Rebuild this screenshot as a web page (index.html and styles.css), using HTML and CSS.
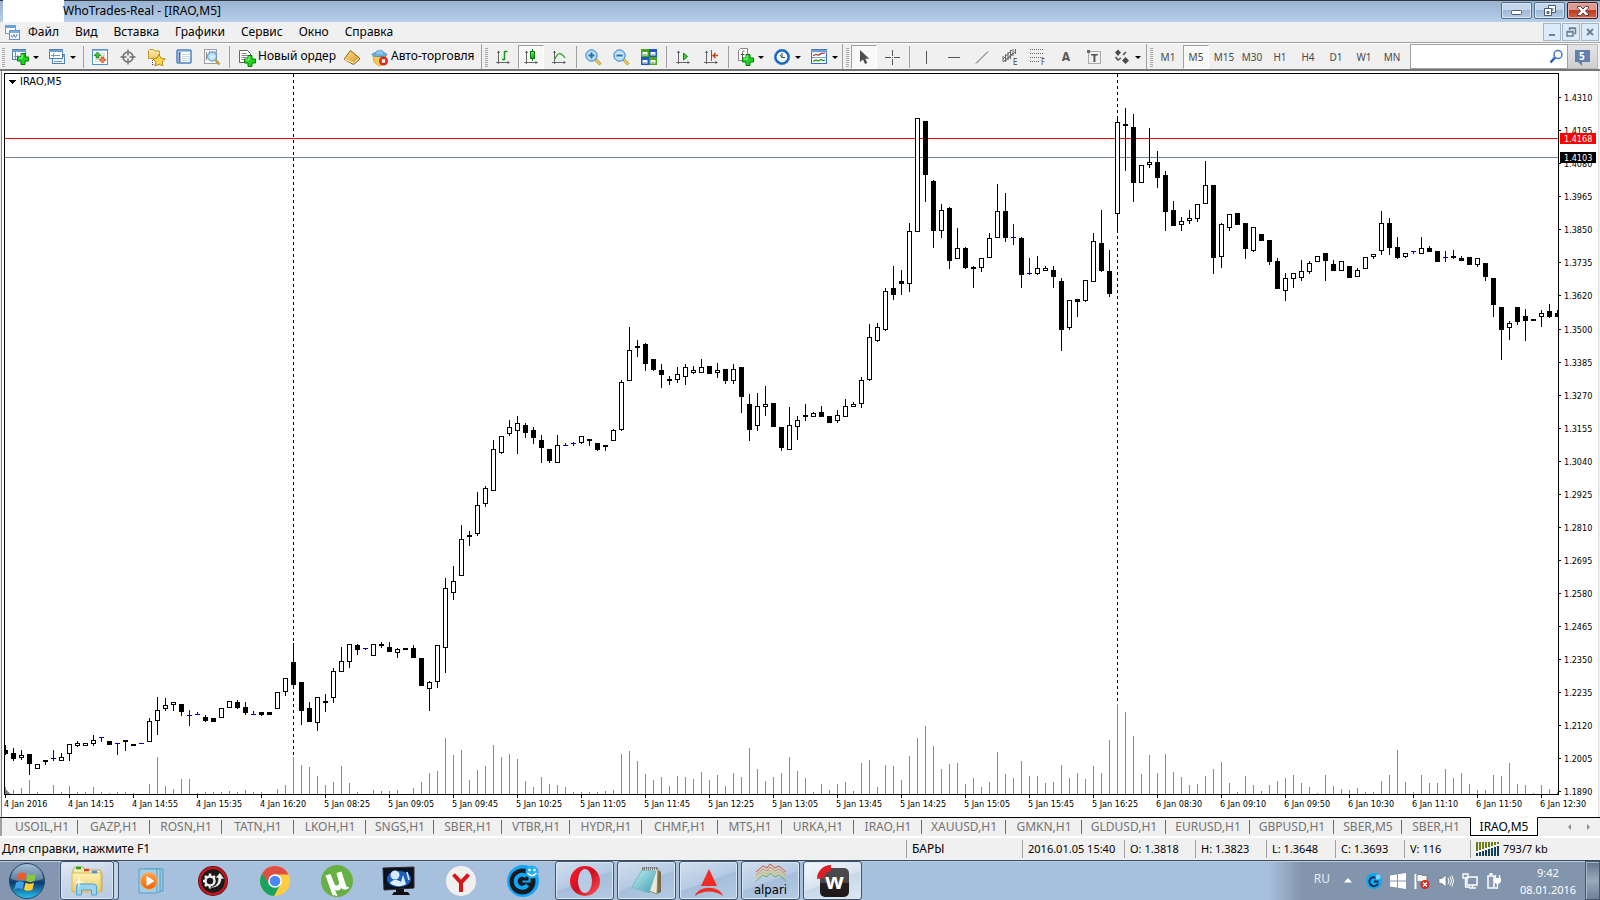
FILE: index.html
```html
<!DOCTYPE html>
<html lang="ru">
<head>
<meta charset="utf-8">
<title>WhoTrades-Real - [IRAO,M5]</title>
<link rel="stylesheet" href="styles.css">
</head>
<body>
<svg class="defs" aria-hidden="true">
  <defs>
    <linearGradient id="gOrb" x1="0" y1="0" x2="0" y2="1"><stop offset="0" stop-color="#7f9fc0"/><stop offset=".45" stop-color="#22507f"/><stop offset=".55" stop-color="#0a3c6e"/><stop offset="1" stop-color="#29c3f5"/></linearGradient>
    <linearGradient id="gFolder" x1="0" y1="0" x2="0" y2="1"><stop offset="0" stop-color="#fdf3b4"/><stop offset="1" stop-color="#ecc867"/></linearGradient>
    <linearGradient id="gOrange" x1="0" y1="0" x2="0" y2="1"><stop offset="0" stop-color="#ffa64d"/><stop offset="1" stop-color="#ee6206"/></linearGradient>
    <linearGradient id="gOpera" x1="0" y1="0" x2="1" y2="1"><stop offset="0" stop-color="#ff1b2d"/><stop offset=".5" stop-color="#d01020"/><stop offset="1" stop-color="#ff5560"/></linearGradient>
    <linearGradient id="gNote" x1="0" y1="0" x2="1" y2="1"><stop offset="0" stop-color="#c3eef2"/><stop offset="1" stop-color="#3d9fb0"/></linearGradient>
    <linearGradient id="gW" x1="0" y1="0" x2="0" y2="1"><stop offset="0" stop-color="#4c4c4e"/><stop offset=".5" stop-color="#474749"/><stop offset=".51" stop-color="#262022"/><stop offset="1" stop-color="#1c1718"/></linearGradient>
    <linearGradient id="gGreen" x1="0" y1="0" x2="0" y2="1"><stop offset="0" stop-color="#6df06d"/><stop offset="1" stop-color="#0ba90b"/></linearGradient>
    <linearGradient id="gBook" x1="0" y1="0" x2="1" y2="1"><stop offset="0" stop-color="#fbe08a"/><stop offset="1" stop-color="#d0932a"/></linearGradient>
    <radialGradient id="gLens"><stop offset="0" stop-color="#e2f6ff"/><stop offset="1" stop-color="#9fd4f5"/></radialGradient>
    <symbol id="plus" viewBox="0 0 12 12"><path d="M4 .5h4V4h3.500v4H8v3.500H4V8H.5V4H4z" fill="#1fd61f" stroke="#067a06"/><path d="M5 1.500v3.500H1.500" fill="none" stroke="#9dff9d"/></symbol>
    <symbol id="axes" viewBox="0 0 16 16"><path d="M3.500 15V2M1 13.500h13" fill="none" stroke="#666"/><path d="M2 4h3L3.500 1.500zM12.500 12v3l2.500-1.500z" fill="#555"/></symbol>
  </defs>
</svg>

<header class="titlebar">
  <div class="title-mask"></div>
  <h1 class="title">WhoTrades-Real - [IRAO,M5]</h1>
  <div class="win-buttons">
    <button class="win-btn" aria-label="Свернуть"><svg width="29" height="15"><rect x="9.500" y="7.500" width="10" height="4" rx="1" fill="#fff" stroke="#4c5a70"/></svg></button>
    <button class="win-btn" aria-label="Восстановить"><svg width="29" height="15"><path d="M13.500 2.500h7v7h-7z" fill="#fff" stroke="#4c5a70"/><path d="M15.500 5h3v3h-3z" fill="#7e98b8"/><path d="M9.500 5.500h7v7h-7z" fill="#fff" stroke="#4c5a70"/><path d="M12 8.500h2v2h-2z" fill="#9ab3cf" stroke="#4c5a70"/></svg></button>
    <button class="win-btn win-close" aria-label="Закрыть"><svg width="29" height="15"><path d="M9.500 3.500h3l2.500 2.500 2.500-2.500h3v1.500L17.500 8l3 3v1.500h-3L15 10l-2.500 2.500h-3V11l3-3-3-3z" fill="#fff" stroke="#5a3a42"/></svg></button>
  </div>
</header>

<nav class="menubar">
  <svg class="app-icon" width="15" height="15"><rect x=".5" y=".5" width="10" height="8" fill="#fff" stroke="#6aa0dc"/><path d="M1 2h9" stroke="#6aa0dc" stroke-width="2"/><rect x="4.500" y="5.500" width="10" height="9" fill="#fff" stroke="#5a94d8"/><path d="M5 7h9" stroke="#7db0e6" stroke-width="2"/><path d="M6 10l1.500 2.500L9 9.500l1.500 3L12 9.500l1 1" fill="none" stroke="#4a86cc"/></svg>
  <button class="menu">Файл</button><button class="menu">Вид</button><button class="menu">Вставка</button><button class="menu">Графики</button><button class="menu">Сервис</button><button class="menu">Окно</button><button class="menu">Справка</button>
  <div class="mdi-buttons">
    <button class="mdi-btn" aria-label="Свернуть окно"><svg width="16" height="16"><path d="M5 11h6" stroke="#6c8296" stroke-width="2"/></svg></button>
    <button class="mdi-btn" aria-label="Восстановить окно"><svg width="16" height="16"><path d="M6.500 6V4h6v5.500H11M6.500 4.500h6" fill="none" stroke="#6c8296" stroke-width="1.500"/><path d="M4 7.500h6V12H4zM4 8h6" fill="none" stroke="#6c8296" stroke-width="1.500"/></svg></button>
    <button class="mdi-btn" aria-label="Закрыть окно"><svg width="16" height="16"><path d="M5 5l6 6M11 5l-6 6" stroke="#6c8296" stroke-width="2"/></svg></button>
  </div>
</nav>

<div class="toolbar">
  <div class="group group-first">
    <button class="tool drop" aria-label="Новый график"><svg width="18" height="18"><rect x="1.500" y="1.500" width="13" height="10" fill="#fff" stroke="#4f81b5"/><path d="M1 3h14" stroke="#6f9fd0" stroke-width="2"/><path d="M4.500 4v7M3 8.500h9M7 7v3" stroke="#7d93a8" fill="none"/><use href="#plus" x="6" y="5" width="12" height="12"/></svg></button>
    <button class="tool drop" aria-label="Профили"><svg width="18" height="18"><rect x="4.500" y="6.500" width="12" height="9" fill="#eaf3fb" stroke="#4f81b5"/><path d="M4 8h13" stroke="#6f9fd0" stroke-width="2"/><rect x="1.500" y="1.500" width="13" height="9" fill="#fff" stroke="#4f81b5"/><path d="M1 3h14" stroke="#6f9fd0" stroke-width="2"/><path d="M3 7.500h9M5.500 5v4M6 13.500h8" stroke="#8095a8"/></svg></button>
    <span class="sep"></span>
    <button class="tool" aria-label="Обзор рынка"><svg width="16" height="16"><rect x=".5" y=".5" width="15" height="15" fill="#fff" stroke="#5592cc"/><path d="M1 1.500h14" stroke="#8fc0ea"/><path d="M9 4.500h4M10 6.500h3M3 10.500h3M3 12.500h4" stroke="#d0d5da"/><path d="M5.500 3L9 6.500H7V9H4V6.500H2z" fill="#3fbf3f" stroke="#0c7a0c" stroke-width=".7"/><path d="M10.500 14L7 10.500h2V8h3v2.500h2z" fill="#f0884e" stroke="#b8330c" stroke-width=".7"/></svg></button>
    <button class="tool" aria-label="Окно данных"><svg width="16" height="16"><circle cx="8" cy="8" r="5" fill="none" stroke="#6d6d6d" stroke-width="1.500"/><path d="M8 .5v6M8 9.500v6M.5 8h6M9.500 8h6" stroke="#6d6d6d" stroke-width="1.300"/></svg></button>
    <button class="tool" aria-label="Навигатор"><svg width="19" height="18"><path d="M1.500 10.500v-8l1-1h4l1 1.500h5v7.500z" fill="url(#gFolder)" stroke="#c29a26"/><path d="M5.500 12v5h3" fill="none" stroke="#555" stroke-dasharray="1 1"/><path d="M12 6.500l2 3.700 4.200.7-3 3 .6 4-3.800-1.800-3.700 1.800.6-4-3-3 4.200-.7z" fill="#ffd84a" stroke="#b98a12"/></svg></button>
    <button class="tool" aria-label="Терминал"><svg width="16" height="16"><rect x="1" y="1" width="14" height="13" rx="1" fill="#fff" stroke="#4a80c0" stroke-width="1.500"/><path d="M2 2.500h12" stroke="#a9c9ea"/><path d="M3.500 3v10" stroke="#4a6ea0" stroke-width="2"/><path d="M6 5.500h8M6 7.500h8M6 9.500h8M6 11.500h8" stroke="#c9d8e8"/></svg></button>
    <button class="tool" aria-label="Тестер стратегий"><svg width="18" height="18"><rect x="1.500" y="1.500" width="12" height="14" fill="#f7f7f7" stroke="#9aa0a6"/><path d="M3.500 12V4M6.500 9V3M9.500 8V3M12 6V3" stroke="#8a8f94"/><circle cx="9" cy="8.500" r="4.500" fill="url(#gLens)" fill-opacity=".85" stroke="#5d93c4"/><path d="M12.500 12l4 4.500" stroke="#c89834" stroke-width="2.500"/></svg></button>
    <span class="sep"></span>
    <button class="tool labelled order"><svg width="18" height="18"><path d="M1.500 1.500h8l3 3v9h-11z" fill="#fff" stroke="#666"/><path d="M3.500 4.500h5M3.500 6.500h7M3.500 8.500h6M3.500 10.500h4" stroke="#888"/><use href="#plus" x="6" y="6" width="12" height="12"/></svg>Новый ордер</button>
    <button class="tool" aria-label="MetaEditor"><svg width="18" height="16"><path d="M1.500 9.500L7.500 1.500l9 7.500v1.500L10.500 15.500l-9-5z" fill="url(#gBook)" stroke="#8f6212"/><path d="M2 10.500l8.500 3.500 5.500-4.500" fill="none" stroke="#fff3c8"/></svg></button>
    <button class="tool labelled auto"><svg width="18" height="18"><path d="M2 7h13l-2 8-5 2-5-4z" fill="#f3cc52" stroke="#c3922a" stroke-width=".7"/><ellipse cx="8.500" cy="5.500" rx="7.500" ry="2.200" fill="#6fb3dc" stroke="#3a83b5" stroke-width=".7"/><path d="M4.500 5C5 1.500 7 1 8 2c1.500-1.500 4.500-1 5 3" fill="#8ac8ea" stroke="#3a83b5" stroke-width=".7"/><circle cx="12.500" cy="12" r="4.500" fill="#dc2a1c"/><rect x="10.800" y="10.300" width="3.400" height="3.400" fill="#fff"/></svg>Авто-торговля</button>
  </div>
  <div class="group">
    <button class="tool" aria-label="Бары"><svg width="16" height="16"><use href="#axes" width="16" height="16"/><path d="M9.500 2v9M9.500 2.500h3M7 10.500h2.500" fill="none" stroke="#149a14" stroke-width="1.500"/></svg></button>
    <button class="tool pressed" aria-label="Свечи"><svg width="16" height="16"><use href="#axes" width="16" height="16"/><path d="M9.500 0v12" stroke="#0b7a0b"/><rect x="7.500" y="2.500" width="4" height="7" fill="url(#gGreen)" stroke="#0b7a0b"/></svg></button>
    <button class="tool" aria-label="Линия"><svg width="16" height="16"><use href="#axes" width="16" height="16"/><path d="M4 10c3-7 6-7 10-1" fill="none" stroke="#28a028" stroke-width="1.200"/></svg></button>
    <span class="sep"></span>
    <button class="tool" aria-label="Приблизить"><svg width="17" height="17"><path d="M10.500 10.500l5 5" stroke="#b58a2a" stroke-width="3"/><path d="M10.500 10.500l5 5" stroke="#f2d468" stroke-width="1.500"/><circle cx="6.500" cy="6.500" r="5.700" fill="url(#gLens)" stroke="#3c7fc0"/><path d="M6.500 3.500v6M3.500 6.500h6" stroke="#2a70a8" stroke-width="2"/></svg></button>
    <button class="tool" aria-label="Отдалить"><svg width="17" height="17"><path d="M10.500 10.500l5 5" stroke="#b58a2a" stroke-width="3"/><path d="M10.500 10.500l5 5" stroke="#f2d468" stroke-width="1.500"/><circle cx="6.500" cy="6.500" r="5.700" fill="url(#gLens)" stroke="#3c7fc0"/><path d="M3.500 6.500h6" stroke="#2a70a8" stroke-width="2"/></svg></button>
    <button class="tool" aria-label="Расположить окна"><svg width="16" height="16"><path d="M0 0h8v8H0zM8 8h8v8H8z" fill="#46a818"/><path d="M8 0h8v8H8zM0 8h8v8H0z" fill="#1f57c4"/><path d="M1.500 3h5v3.500h-5zM9.500 3h5v3.500h-5zM1.500 11h5v3.500h-5zM9.500 11h5v3.500h-5z" fill="#f4f8f4"/><path d="M2.500 5.500h3M10.500 5.500h3M2.500 13.500h3M10.500 13.500h3" stroke="#9ab"/></svg></button>
    <span class="sep"></span>
    <button class="tool" aria-label="Автопрокрутка"><svg width="16" height="16"><use href="#axes" width="16" height="16"/><path d="M8.500 4v7l4-3.500z" fill="#3fd03f" stroke="#0b8a0b"/></svg></button>
    <button class="tool" aria-label="Сдвиг графика"><svg width="16" height="16"><use href="#axes" width="16" height="16"/><path d="M8.500 1v11" stroke="#2a6fb0"/><path d="M15 6.500h-5M12.500 4L10 6.500 12.500 9" fill="none" stroke="#d04010" stroke-width="1.400"/></svg></button>
    <span class="sep"></span>
    <button class="tool drop" aria-label="Индикаторы"><svg width="18" height="18"><path d="M2.500 2.500l2-2h7v12h-9z" fill="#fff" stroke="#888"/><path d="M8.500 3c-2-.5-2 1-2 3v4M4.500 6.500h4" fill="none" stroke="#555"/><use href="#plus" x="6" y="6" width="12" height="12"/></svg></button>
    <button class="tool drop" aria-label="Периоды"><svg width="18" height="18"><circle cx="9" cy="9" r="6.700" fill="#eef6fc" stroke="#0f5cb4" stroke-width="2.500"/><circle cx="9" cy="9" r="7.500" fill="none" stroke="#4ea3ee" stroke-width=".7"/><path d="M9 5v4.500h3M7 7l2 2.500" fill="none" stroke="#444"/></svg></button>
    <button class="tool drop" aria-label="Шаблоны"><svg width="18" height="18"><rect x="1.500" y="1.500" width="15" height="14" fill="#fff" stroke="#3a70b4"/><path d="M1 3h16" stroke="#6fa0dc" stroke-width="2.500"/><path d="M2 9.500h14" stroke="#7aa4d4"/><path d="M3 7.500l3-1 3 .5 2-1.500 4-.500" fill="none" stroke="#a82410" stroke-width="1.200"/><path d="M3 13.500l3-1.500 2 1 3-1.500 2 1 2-.5" fill="none" stroke="#1d8a1d" stroke-width="1.200"/></svg></button>
  </div>
  <div class="group">
    <button class="tool pressed" aria-label="Курсор"><svg width="16" height="16"><path d="M4 1v12l3-2.500 2 4.500 2.300-1-2-4.300h4z" fill="#4d4d4d"/></svg></button>
    <button class="tool" aria-label="Перекрестие"><svg width="16" height="16"><path d="M8.500 1v6M8.500 10v6M1 8.500h6M10 8.500h6M8 8.500h1" stroke="#555"/></svg></button>
    <span class="sep"></span>
    <button class="tool" aria-label="Вертикальная линия"><svg width="16" height="16"><path d="M8.500 2v13" stroke="#555"/></svg></button>
    <button class="tool" aria-label="Горизонтальная линия"><svg width="16" height="16"><path d="M2 8.500h12" stroke="#555"/></svg></button>
    <button class="tool" aria-label="Трендовая линия"><svg width="16" height="16"><path d="M2 14.500L14 2.500" stroke="#555"/></svg></button>
    <button class="tool" aria-label="Канал"><svg width="18" height="18"><path d="M2 11L11 2M4 13.500L15 3M2 8v6M4.500 6v8M7 4v8M9.500 2v9M12 1v7M14.500 1v5M2 14l10-9" fill="none" stroke="#666"/><text x="12" y="17" class="mini">E</text></svg></button>
    <button class="tool" aria-label="Фибоначчи"><svg width="18" height="18"><path d="M1 1.500h14M1 5.500h14M1 9.500h14M1 13.500h9" stroke="#666" stroke-dasharray="1 1"/><text x="12" y="17" class="mini">F</text></svg></button>
    <button class="tool letter" aria-label="Текст">A</button>
    <button class="tool" aria-label="Текстовая метка"><svg width="16" height="16"><rect x="2.500" y="2.500" width="12" height="12" fill="none" stroke="#666" stroke-dasharray="1 1"/><rect x="1" y="1" width="3" height="3" fill="#666"/><text x="5" y="13" class="tee">T</text></svg></button>
    <button class="tool drop" aria-label="Стрелки"><svg width="18" height="18"><path d="M5 1.500l3 3L5 8 2 4.500zM12.500 9l3.500 3.500-3.500 3.500L9 12.500z" fill="#4d4d4d"/><path d="M2.500 9l2.500 3 3-2M10 7l3-3" fill="none" stroke="#4d4d4d" stroke-width="1.500"/></svg></button>
  </div>
  <div class="group periods">
    <button class="tool period">M1</button><button class="tool period pressed">M5</button><button class="tool period">M15</button><button class="tool period">M30</button><button class="tool period">H1</button><button class="tool period">H4</button><button class="tool period">D1</button><button class="tool period">W1</button><button class="tool period">MN</button>
  </div>
  <div class="search">
    <input class="search-input" type="text" aria-label="Поиск">
    <svg class="search-icon" width="15" height="15"><circle cx="9" cy="5.500" r="4" fill="#fff" stroke="#3c74d0" stroke-width="1.500"/><path d="M6 8.500L1.500 13.500" stroke="#2a5cc0" stroke-width="2.500"/></svg>
  </div>
  <button class="news" aria-label="5 сообщений"><svg width="17" height="17"><path d="M1 0h15v12H8v4l-4-4H1z" fill="#627fb0"/><text x="5" y="10" class="badge">5</text></svg></button>
</div>

<main class="chart-window">
  <svg class="plot" id="plot" role="img" aria-label="График IRAO, M5"></svg>
  <svg class="prices" id="prices"></svg>
  <svg class="times" id="times"></svg>
</main>

<nav class="tabs">
  <button class="tab w72">USOIL,H1</button><button class="tab w72">GAZP,H1</button><button class="tab w72">ROSN,H1</button><button class="tab w72">TATN,H1</button><button class="tab w72">LKOH,H1</button><button class="tab w68">SNGS,H1</button><button class="tab w68">SBER,H1</button><button class="tab w68">VTBR,H1</button><button class="tab w72">HYDR,H1</button><button class="tab w76">CHMF,H1</button><button class="tab w64">MTS,H1</button><button class="tab w72">URKA,H1</button><button class="tab w68">IRAO,H1</button><button class="tab w84">XAUUSD,H1</button><button class="tab w76">GMKN,H1</button><button class="tab w84">GLDUSD,H1</button><button class="tab w84">EURUSD,H1</button><button class="tab w84">GBPUSD,H1</button><button class="tab w68">SBER,M5</button><button class="tab w68 last">SBER,H1</button><button class="tab w68 active">IRAO,M5</button>
  <div class="tab-scroll">
    <button class="scroll" aria-label="Назад"><svg width="5" height="8"><path d="M4 1v6L1 4z" fill="#8c8c8c"/></svg></button>
    <button class="scroll" aria-label="Вперёд"><svg width="5" height="8"><path d="M1 1v6l3-3z" fill="#8c8c8c"/></svg></button>
  </div>
</nav>

<footer class="status">
  <span class="hint">Для справки, нажмите F1</span>
  <span class="cell c116">БАРЫ</span><span class="cell c102">2016.01.05 15:40</span><span class="cell c71">O: 1.3818</span><span class="cell c71">H: 1.3823</span><span class="cell c69">L: 1.3648</span><span class="cell c69">C: 1.3693</span><span class="cell c66">V: 116</span>
  <span class="cell traffic"><svg width="24" height="14"><path d="M1 0v9M4 0v8M7 0v7M10 0v6M13 0v5M16 0v4M19 0v3M22 0v2" stroke="#6b7d10" stroke-width="2"/><path d="M1 14v-3M4 14v-4M7 14V9M10 14V8M13 14V7M16 14V6M19 14V5M22 14V4" stroke="#123f5e" stroke-width="2"/></svg>793/7 kb</span>
</footer>

<div class="taskbar">
  <button class="start" aria-label="Пуск"><svg width="40" height="38"><circle cx="20" cy="19" r="17.500" fill="url(#gOrb)" stroke="#27466a"/><path d="M4 17a16 15 0 0 1 32 0c-8 3-24 3-32 0z" fill="#fff" opacity=".3"/><path d="M11 12c3-2 5-2 8-.5l-1.500 7c-3-1.300-5-1.300-8 .3z" fill="#ee5a2c"/><path d="M20.500 12c3 1.500 5.500 1.300 8.500-.2L27.500 19c-3 1.500-5.500 1.500-8.500 0z" fill="#8cc63f"/><path d="M9 20.500c3-1.600 5-1.500 8-.2l-1.500 7c-3-1.400-5-1.400-8 .2z" fill="#3fa0e8"/><path d="M18.500 20.700c3 1.500 5.500 1.400 8.500 0l-1.600 7c-3 1.500-5.400 1.500-8.400 0z" fill="#ffcc33"/></svg></button>
  <button class="task open explorer" aria-label="Проводник"><svg width="34" height="32"><path d="M3 24V5l2-3h8l2 3h15l2 3v18z" fill="url(#gFolder)" stroke="#c9a44b"/><path d="M2 8h29v19H2z" fill="url(#gFolder)" stroke="#d8b65c"/><path d="M6 3h5" stroke="#19a319" stroke-width="2.500"/><path d="M14 5h5" stroke="#d5452b" stroke-width="2.500"/><path d="M22 7h5" stroke="#4093dd" stroke-width="2.500"/><path d="M6.500 30v-8q0-3 3-3h14q3 0 3 3v8h-5v-5h-10v5z" fill="#9bd3ee" stroke="#4fa3cf"/><path d="M9 10l1 6 5 1-5 1-1 6-1-6-5-1 5-1z" fill="#fff" opacity=".7"/></svg></button>
  <button class="stack" aria-label="Ещё окно"></button>
  <button class="pin" aria-label="Проигрыватель"><svg width="26" height="28"><path d="M9 2h16v22H9z" fill="#8fc8e4" stroke="#5b9ec2"/><path d="M6 2h16v23H6z" fill="#a5d5ea" stroke="#5b9ec2"/><path d="M1 2h18v24H1z" fill="#9fd0e8" stroke="#5b9ec2"/><circle cx="11" cy="14" r="8.500" fill="url(#gOrange)" stroke="#f7b27a"/><path d="M8.500 9v10l8-5z" fill="#fff"/></svg></button>
  <button class="pin" aria-label="Driver Booster"><svg width="32" height="32"><circle cx="16" cy="16" r="15" fill="#5a0c10"/><circle cx="16" cy="16" r="13" fill="#191919" stroke="#c4161c" stroke-width="2.500"/><circle cx="13" cy="16" r="4.500" fill="none" stroke="#eee" stroke-width="2.500"/><path d="M13 8.500v3M13 20.500v3M6 16h3M8 11l2 2M8 21l2-2M18 11l-2 2" stroke="#eee" stroke-width="2.500"/><path d="M14 21.500c5 0 7-3 7-8.500h-3l5-5.500 4.500 6.500H24.500c0 5-4 9-10.500 9z" fill="#eee" stroke="#191919" stroke-width=".7"/></svg></button>
  <button class="pin" aria-label="Chrome"><svg width="32" height="32"><circle cx="16" cy="16" r="15" fill="#ffcd42"/><path d="M3 8.500A15 15 0 0 1 29.500 9.500H16L9.500 20z" fill="#dd4f43"/><path d="M3 8.500A15 15 0 0 0 15 31l6.500-11.500-11 0z" fill="#1aa260"/><circle cx="16" cy="16" r="6.800" fill="#fff"/><circle cx="16" cy="16" r="5.300" fill="#4a89f4"/></svg></button>
  <button class="pin" aria-label="µTorrent"><svg width="34" height="34"><circle cx="17" cy="17" r="16" fill="#67b044"/><path d="M5.500 11.500l5-1.500 4 10c1 2.500 5 2 4.500-1.500L16.500 9l5-1.500 4.500 14c.6 1.500 1.500 2 3.500 1.500-1 2.500-5.500 4-8 1-1.500 2.500-4 3-6.500 2l2.500 6-5-1z" fill="#fff"/></svg></button>
  <button class="pin" aria-label="Монитор"><svg width="34" height="32"><path d="M1 3l31-1v21L2 25z" fill="#101014" stroke="#2a2a30"/><path d="M3 5l27-1v17L4 23z" fill="#07142c"/><ellipse cx="17" cy="14" rx="12" ry="8" fill="#1d5fb8"/><circle cx="13" cy="10" r="4.500" fill="#d5eafc"/><path d="M8 18c4-5 8-3 11-1l2-7 3 9c-4 3-12 3-16-1z" fill="#d9efff"/><path d="M25 7l2 8" stroke="#cfe8ff" stroke-width="1.500"/><path d="M14 24h8v3h4l2 3H10l2-3h2z" fill="#111"/></svg></button>
  <button class="pin" aria-label="Яндекс"><svg width="32" height="32"><circle cx="16" cy="16" r="15" fill="#f1f0ef"/><path d="M8.500 9.500l7.500 8 7.500-8M16 17.500V27" fill="none" stroke="#d6141a" stroke-width="4"/></svg></button>
  <button class="pin" aria-label="Clip"><svg width="34" height="34"><circle cx="17" cy="17" r="16" fill="#12a7f6"/><circle cx="16.500" cy="17.500" r="13" fill="#16191d"/><path d="M20.500 12.500a6.500 6.500 0 1 0 1 8.500" fill="none" stroke="#12a7f6" stroke-width="4"/><path d="M16.500 17.500h7v-4" fill="none" stroke="#12a7f6" stroke-width="2"/><circle cx="26" cy="8" r="6.500" fill="#20b0fa"/><circle cx="23.500" cy="6" r="1.300" fill="#fff"/><circle cx="28.500" cy="6" r="1.300" fill="#fff"/><path d="M21.500 9q4.500 5 9 0" fill="none" stroke="#fff" stroke-width="1.500"/></svg></button>
  <div class="running">
    <button class="task open" aria-label="Opera"><svg width="32" height="32"><ellipse cx="16" cy="16" rx="15" ry="15" fill="url(#gOpera)"/><ellipse cx="16" cy="16" rx="7" ry="12" fill="#b6cce6"/></svg></button>
    <button class="task open" aria-label="Блокнот"><svg width="32" height="30"><path d="M26 3l4 3v20l-4 2z" fill="#7a6b46"/><path d="M12 2h15l-1 26-8-3z" fill="#e8ead8" stroke="#8c8c7c"/><path d="M11 4l14 1-7 22L1 21z" fill="url(#gNote)" stroke="#7db8bf"/><path d="M11 2.500h16" stroke="#777" stroke-dasharray="1 1" stroke-width="3"/></svg></button>
    <button class="task open" aria-label="Aurora"><svg width="30" height="32"><path d="M15 4l8 17H7z" fill="#ee2e24"/><path d="M1 31c3-11 25-11 28 0-8-6-20-6-28 0z" fill="#ee2e24"/></svg></button>
    <button class="task open alpari"><svg width="32" height="19"><g fill="none" stroke-width="1"><path d="M1 9l7-6 4 2 3-4 5 4 4-2 7 6" stroke="#d9512c"/><path d="M1 12l7-6 4 2 3-4 5 4 4-2 7 6" stroke="#ea8a2e"/><path d="M1 15l7-6 4 2 3-4 5 4 4-2 7 6" stroke="#d9c13a"/><path d="M1 18l7-6 4 2 3-4 5 4 4-2 7 6" stroke="#7cad3c"/></g></svg>alpari</button>
    <button class="task open focused" aria-label="WhoTrades"><svg width="34" height="34"><rect x="4" y="4" width="29" height="29" rx="5" fill="url(#gW)"/><path d="M1 15A14 14 0 0 1 15 1v6a8 8 0 0 0-7 7z" fill="#dc1e26"/><text x="9" y="25" class="wlogo">w</text></svg></button>
  </div>
  <div class="tray">
    <span class="lang">RU</span>
    <svg class="tray-up" width="8" height="5"><path d="M0 4.500L4 0l4 4.500z" fill="#fff"/></svg>
    <svg class="ti" width="16" height="16"><circle cx="8" cy="8" r="8" fill="#12a7f6"/><path d="M10.500 5a4.500 4.500 0 1 0 1.500 5.500M8 8.500h4.500" fill="none" stroke="#14304a" stroke-width="2"/><circle cx="12" cy="4" r="2.500" fill="#7fd3ff"/></svg>
    <svg class="ti" width="16" height="16"><path d="M0 2.500l7-1v6H0zM8 1.300L16 0v7.500H8zM0 8.500h7v6l-7-1zM8 8.500h8V16l-8-1.300z" fill="#fff"/></svg>
    <svg class="ti" width="16" height="16"><path d="M1.500 16V1" stroke="#fff" stroke-width="2"/><path d="M3 2c4-2 5 2 10 0v7c-4 2-6-2-10 0z" fill="#f4f4f4" stroke="#666" stroke-width=".7"/><circle cx="11" cy="11.500" r="4.500" fill="#d6281c"/><path d="M9 9.500l4 4M13 9.500l-4 4" stroke="#fff" stroke-width="1.300"/></svg>
    <svg class="ti" width="16" height="16"><path d="M1 5.500h3L8 2v12l-4-3.500H1z" fill="#fff" stroke="#666" stroke-width=".6"/><path d="M10 5q2 3 0 6M12 3.500q3 4.500 0 9M14 2.500q3 5.500 0 11" fill="none" stroke="#fff"/></svg>
    <svg class="ti" width="16" height="16"><rect x="5" y="4" width="10" height="8" fill="#7f93ad" stroke="#fff" stroke-width="1.500"/><path d="M7 15h7M10.500 12v3" stroke="#fff" stroke-width="1.500"/><path d="M1 1h5v4H1zM3.500 5v9H8" fill="none" stroke="#fff" stroke-width="1.300"/></svg>
    <svg class="ti" width="16" height="16"><path d="M2 3h6v12H2z" fill="#8a9bb3" stroke="#fff" stroke-width="1.500"/><path d="M3.500 1h3" stroke="#fff" stroke-width="2"/><path d="M8 5h7v3q-1 3-3.500 3T8 8z" fill="#fff"/><path d="M9.500 2v3M13.500 2v3M11.500 11v4H9" fill="none" stroke="#fff" stroke-width="1.300"/></svg>
    <time class="clock"><span>9:42</span><span>08.01.2016</span></time>
    <button class="show-desktop" aria-label="Показать рабочий стол"></button>
  </div>
</div>
<script src="chart.js"></script>
</body>
</html>
```
FILE: styles.css
```css
* { box-sizing: border-box; }
body {
  margin: 0;
  min-height: 100vh;
  display: flex;
  flex-direction: column;
  overflow: hidden;
  background: #f0f0f0;
  color: #000;
  font: 12px/16px "Noto Sans", "Open Sans", sans-serif;
}
button {
  margin: 0;
  padding: 0;
  border: 0;
  background: none;
  color: inherit;
  font: inherit;
}
svg { display: block; flex: none; }
.defs { position: absolute; width: 0; height: 0; }

/* Title bar */
.titlebar {
  display: flex;
  height: 22px;
  border-top: 1px solid #32353c;
  background: linear-gradient(#98b2d1, #b7cfe9);
}
.title-mask { width: 61px; margin: -1px 0 0 3px; background: #fff; }
.title { flex: 1; margin: 0 0 0 -1px; font-size: 12px; font-weight: 400; line-height: 20px; }
.win-buttons { display: flex; gap: 2px; padding: 1px 2px 0 0; }
.win-btn {
  width: 31px;
  height: 17px;
  border: 1px solid #56708f;
  border-radius: 2px;
  background: linear-gradient(#c3d6ec 50%, #9db8d6 50%, #b5cde6);
  box-shadow: inset 0 0 0 1px #d6e4f2;
}
.win-close {
  border-color: #4a1720;
  background: linear-gradient(#dd9a8e 45%, #bd3a22 50%, #d0644c);
  box-shadow: inset 0 0 0 1px #e5b0a6;
}

/* Menu bar */
.menubar { display: flex; align-items: center; height: 21px; padding: 0 1px 0 5px; border-bottom: 1px solid #a0a0a0; }
.menu { padding: 0 8px; line-height: 18px; }
.mdi-buttons { display: flex; gap: 1px; margin-left: auto; }
.mdi-btn { width: 18px; height: 18px; border: 1px solid #a5b5c6; background: #dcebf9; }

/* Tool bar */
.toolbar { display: flex; height: 28px; border-top: 1px solid #fff; border-bottom: 2px solid #767676; }
.group { display: flex; flex: none; align-items: flex-start; position: relative; padding: 1px 0 0 7px; border-left: 1px solid #a0a0a0; }
.group::before {
  content: "";
  position: absolute;
  left: 3px;
  top: 4px;
  width: 3px;
  height: 19px;
  background: repeating-linear-gradient(#a8a8a8 0 1px, #f0f0f0 1px 2px);
}
.group-first { width: 481px; padding-left: 6px; border-left: 0; }
.group-first::before { left: 2px; }
.periods { width: 264px; margin-left: 1px; }
.tool {
  display: flex;
  align-items: center;
  justify-content: center;
  width: 28px;
  height: 24px;
  white-space: nowrap;
}
.drop { width: 37px; justify-content: flex-start; padding-left: 5px; }
.drop::after {
  content: "";
  margin-left: 4px;
  border: 3px solid transparent;
  border-top-color: #000;
  border-bottom: 0;
}
.labelled { justify-content: flex-start; padding: 0 0 2px 6px; gap: 2px; }
.labelled svg { margin-top: 3px; }
.order { width: 106px; }
.auto { width: 114px; padding-left: 5px; }
.pressed { border: 1px solid #a0a0a0; border-right-color: #fff; border-bottom-color: #fff; background: #f8f8f8; margin: 0 1px; width: 26px; }
.sep { width: 1px; height: 22px; margin: 1px 2px 0 3px; background: #a0a0a0; }
.period { color: #4a4a4a; font-size: 10px; }
.letter { color: #5a5a5a; font: 700 12px "DejaVu Sans Condensed", sans-serif; }
.mini { font: 8px "DejaVu Sans Condensed", sans-serif; fill: #444; }
.tee { font: 700 11px "DejaVu Sans Condensed", sans-serif; fill: #555; }
.search { flex: 1; min-width: 0; display: flex; align-items: center; padding-right: 3px; border: 1px solid #a0a0a0; background: #fff; height: 25px; }
.search-input { flex: 1; min-width: 0; width: 0; height: 22px; border: 0; outline: 0; background: none; }
.news { flex: none; width: 30px; margin-right: 2px; padding: 5px 6px; border: 1px solid #b8b8b8; border-left: 0; background: linear-gradient(#e4e4e4, #cfcfcf); height: 25px; }
.badge { font: 700 10px "Noto Sans", sans-serif; fill: #fff; }

/* Chart */
.chart-window {
  flex: 1;
  display: grid;
  grid-template-columns: 1fr 39px;
  grid-template-rows: 1fr 22px;
  padding: 2px 0 0 2px;
  margin: 0 2px;
  background: #fff;
  box-shadow: -1px 0 #808080, 1px 0 #e3e3e3;
}
.plot { width: 100%; height: 100%; border: 1px solid #000; overflow: hidden; }
.prices { width: 100%; height: 100%; overflow: visible; }
.times { grid-column: 1 / 3; width: 100%; height: 100%; }
.scale { font: 9px "DejaVu Sans Condensed", sans-serif; fill: #000; }
.scale-light { fill: #fff; }
.symbol { font: 11px "DejaVu Sans Condensed", sans-serif; fill: #000; }

/* Chart tabs */
.tabs { display: flex; height: 21px; padding-left: 6px; border-top: 1px solid #000; border-bottom: 2px solid #fff; color: #737373; box-shadow: inset 2px 0 #a0a0a0; }
.tab { position: relative; height: 17px; line-height: 17px; white-space: nowrap; text-align: center; }
.tab::after { content: ""; position: absolute; right: 0; top: 2px; width: 1px; height: 14px; background: #6a6a6a; }
.tab.last::after, .tab.active::after { display: none; }
.tab.active { height: 19px; margin-top: -1px; border: 1px solid #000; border-top-color: #fff; background: #fff; color: #000; }
.w64 { width: 64px; } .w68 { width: 68px; } .w72 { width: 72px; } .w76 { width: 76px; } .w84 { width: 84px; }
.tab-scroll { display: flex; gap: 14px; margin-left: auto; padding-right: 9px; }

/* Status bar */
.status { display: flex; align-items: center; height: 22px; }
.hint { flex: 1; padding-left: 2px; }
.cell { height: 18px; padding-left: 5px; border-left: 1px solid #a0a0a0; font-size: 11px; line-height: 18px; white-space: nowrap; }
.c116 { width: 116px; font-size: 12px; } .c102 { width: 102px; } .c71 { width: 71px; } .c69 { width: 69px; } .c66 { width: 66px; }
.traffic { display: flex; align-items: center; gap: 3px; width: 130px; }

/* Task bar */
.taskbar {
  display: flex;
  height: 40px;
  border-top: 1px solid #3f4c5e;
  background: linear-gradient(90deg, #8496b0 0 58px, #a7c0dd 62px calc(100% - 332px), #8295ac calc(100% - 298px));
  box-shadow: inset 0 1px #b9cce2;
}
.start { width: 60px; padding-left: 7px; }
.task, .pin { display: flex; align-items: center; justify-content: center; }
.pin { width: 62px; }
.task {
  width: 59px;
  height: 39px;
  border: 1px solid #3f536e;
  border-radius: 3px;
  background: linear-gradient(160deg, #d2dfee, #b4cae4 50%, #a6bedb 52%, #b5cbe4);
  box-shadow: inset 0 0 0 1px #dbe7f3;
}
.explorer { width: 54px; background: linear-gradient(160deg, #e4ebf4, #c6d5e8 50%, #b8cbe3); }
.focused { background: linear-gradient(160deg, #f4f8fb, #d8e4f0 50%, #c8d8ea 52%, #dbe8f4); }
.stack { width: 5px; margin-right: 1px; border: solid #3f536e; border-width: 1px 1px 1px 0; border-radius: 0 3px 3px 0; background: #c2d4e8; }
.running { display: flex; gap: 3px; margin-left: 1px; }
.alpari { flex-direction: column; font: 13px/16px "DejaVu Sans Condensed", sans-serif; }
.wlogo { font: 700 22px "Noto Sans", sans-serif; fill: #fff; }
.tray { display: flex; align-items: center; margin-left: auto; color: #fff; }
.lang { margin: 0 14px 4px 0; color: #e6ebf1; }
.tray-up { margin-right: 14px; }
.ti { margin-right: 8px; }
.clock { display: flex; flex-direction: column; width: 76px; text-align: center; font-size: 11px; line-height: 17px; margin-right: -1px; }
.show-desktop { align-self: stretch; width: 15px; border: 1px solid #46576d; background: linear-gradient(#63758c, #9aaabd 50%, #6f8197); box-shadow: inset 1px 1px #a9b8c9; }
```
FILE: chart.js
```js
// Each candle: high, body top, body bottom, low, kind (w = rising, f = falling, b = flat), volume
const candles = `745,750,754,755,f,7 748,753,759,761,f,4 750,755,758,760,w,6 754,754,764,775,f,14 764,764,769,769,w,2
760,760,762,765,f,0 750,758,759,761,b,9 753,757,761,761,w,2 744,744,754,761,w,8 741,743,746,747,w,2
743,743,746,746,w,2 735,740,744,746,w,7 737,737,738,742,b,2 741,741,745,745,f,1 743,743,744,755,b,2
740,740,742,751,f,2 744,744,746,746,f,1 743,743,744,744,b,0 718,721,742,742,w,10 697,710,721,735,w,37
698,705,709,711,w,8 702,702,705,711,w,5 704,704,712,716,f,15 710,715,716,726,b,15 712,714,715,715,b,1
715,717,721,722,f,2 718,718,722,722,f,2 708,708,718,718,w,2 701,701,708,708,w,3 700,702,708,709,f,2
702,707,713,715,f,4 711,714,715,715,b,2 712,712,715,716,f,2 712,712,715,715,f,0 692,692,709,709,w,5
678,678,692,696,w,9 643,662,685,686,f,37 682,682,711,725,f,29 702,708,722,722,f,27 697,697,723,731,w,18
694,701,703,712,f,9 668,671,698,703,w,12 647,661,672,672,w,28 644,644,662,668,w,11 644,645,650,655,f,2
648,648,649,650,b,0 644,644,656,656,w,4 642,644,646,648,f,3 642,647,652,652,f,3 648,649,653,658,w,4
648,648,650,650,f,0 645,648,658,658,f,6 658,658,686,686,f,12 681,682,689,711,w,21 645,645,682,688,w,23
578,588,648,673,w,56 566,581,593,600,w,39 525,539,576,576,w,44 531,535,537,546,f,14 492,505,534,536,w,24
486,488,504,507,w,28 440,449,491,491,w,49 436,436,453,454,w,37 420,427,434,436,w,40 416,423,431,454,w,35
423,425,433,438,f,13 427,430,438,444,f,7 435,440,448,463,f,17 449,449,461,463,f,10 435,445,463,463,w,9
443,445,446,446,b,7 442,443,444,446,b,2 436,436,443,444,w,2 439,439,441,446,f,2 443,443,450,451,f,2
445,445,447,451,f,3 429,430,441,441,w,4 380,382,430,431,w,40 327,350,381,381,w,43 340,346,348,357,f,33
343,344,364,371,f,20 359,359,370,371,f,14 364,370,375,388,f,17 376,379,381,385,f,8 367,374,380,383,w,18
364,367,377,385,w,17 366,370,373,374,w,15 359,367,373,373,w,22 366,366,374,374,f,14 363,370,373,378,w,19
369,369,381,384,f,8 364,369,381,384,w,21 367,367,397,413,f,17 394,404,430,441,f,46 393,406,426,431,w,25
386,404,407,416,w,13 403,403,427,427,f,17 427,427,448,451,f,21 407,425,450,450,w,37 416,420,427,440,w,23
404,415,417,421,f,16 412,413,417,417,w,2 406,412,417,417,f,10 416,416,423,423,f,4 410,415,421,423,w,10
399,406,417,417,w,12 402,404,407,407,w,3 377,380,404,408,w,31 324,337,380,381,w,34 323,327,341,342,w,7
288,291,330,331,w,29 266,288,295,300,f,28 270,281,284,295,f,14 223,231,284,292,w,38 118,118,232,232,w,56
121,121,175,202,f,68 180,181,231,248,f,48 204,210,231,238,w,25 207,208,261,269,f,30 228,248,259,259,w,31
247,248,268,269,f,10 266,267,269,288,f,16 258,258,268,272,w,7 233,238,258,258,w,12 184,211,238,238,w,42
193,211,238,242,f,20 224,237,238,245,b,16 237,238,275,288,f,33 258,273,274,275,b,18 256,268,274,275,w,18
266,268,271,271,w,11 266,270,277,288,f,12 278,281,330,351,f,29 300,300,328,330,w,16 299,299,302,317,f,21
280,280,301,302,w,15 233,241,282,282,w,28 210,243,271,272,f,21 250,271,294,297,f,54 119,122,214,231,w,90
108,124,126,171,f,82 114,127,183,202,f,58 165,165,183,183,w,20 128,162,165,168,w,39 151,162,178,188,f,21
171,175,212,231,f,40 201,210,226,226,f,22 217,221,225,231,w,17 210,218,221,224,w,9 204,204,219,222,w,10
161,185,204,204,w,18 185,185,258,274,f,25 223,224,257,268,w,32 214,214,228,231,w,11 213,213,225,225,f,2
223,223,249,259,f,18 227,227,251,252,w,9 234,234,241,241,f,3 240,240,262,265,f,9 258,261,289,289,f,13
273,278,291,301,w,16 273,273,279,288,w,19 260,271,278,281,w,11 261,263,272,274,w,7 256,256,262,262,w,1
253,253,261,281,f,19 260,264,271,271,f,8 261,261,271,271,w,5 266,266,278,278,f,4 268,270,277,277,w,6
257,257,269,269,w,2 254,254,257,259,w,2 211,223,251,255,w,13 218,223,248,255,f,19 237,247,258,259,f,44
253,253,257,258,w,12 251,251,252,254,b,2 237,248,254,254,w,19 246,248,252,252,f,11 251,251,262,262,f,11
251,257,258,262,b,25 250,256,258,259,f,16 256,258,261,261,f,21 257,257,265,265,f,10 258,258,265,267,w,4
263,263,277,281,f,4 278,278,305,317,f,19 307,307,330,360,f,18 321,323,328,340,w,31 307,307,322,325,f,10
309,316,321,341,f,9 319,319,321,321,f,1 310,313,317,327,w,9 304,311,317,318,f,5 310,313,317,317,f,2`
  .split(/\s+/).map(row => row.split(","));

const TOP = 74, BASE = 794, STEP = 8;
const rect = (x, y, w, h, fill) => `<rect x="${x}" y="${y}" width="${w}" height="${h}" fill="${fill}"/>`;

// Price lines and day separators lie under the candles
let plot = rect(0, 138 - TOP, "100%", 1, "#f00") + rect(0, 157 - TOP, "100%", 1, "#708090");
plot += `<path d="M288.500 0V682M1112.500 0V629" stroke="#000" stroke-dasharray="3 3"/>`;
candles.forEach(([hi, top, bottom, lo, kind, volume], i) => {
  const x = i * STEP;
  const color = kind === "b" ? "#0000c0" : "#000";
  plot += rect(x, BASE - TOP - volume, 1, volume, "#32c832");
  plot += rect(x, hi - TOP, 1, lo - hi, color);
  plot += rect(x - 2, top - TOP, 5, bottom - top, color);
  if (kind === "w") plot += rect(x - 1, top - TOP + 1, 3, bottom - top - 2, "#fff");
});
plot += `<path d="M0 714v6h5z" fill="#708090"/><path d="M3 6h8l-4 4z"/>`;
document.getElementById("plot").innerHTML =
  `<g shape-rendering="crispEdges">${plot}</g><text class="symbol" x="15" y="11">IRAO,M5</text>`;

const labels = ["1.4310", "1.4195", "1.4080", "1.3965", "1.3850", "1.3735", "1.3620", "1.3500", "1.3385", "1.3270", "1.3155",
  "1.3040", "1.2925", "1.2810", "1.2695", "1.2580", "1.2465", "1.2350", "1.2235", "1.2120", "1.2005", "1.1890"];
let prices = "";
labels.forEach((label, i) => {
  const y = 24 + i * 33 + (i > 6 ? 1 : 0);
  prices += rect(0, y, 2, 1, "#000") + `<text class="scale" x="5" y="${y + 4}">${label}</text>`;
});
prices += rect(1, 60, 36, 11, "#f00") + `<text class="scale scale-light" x="5" y="69">1.4168</text>`;
prices += rect(1, 79, 36, 11, "#000") + `<text class="scale scale-light" x="5" y="88">1.4103</text>`;
document.getElementById("prices").innerHTML = prices;

const stamps = ["4 Jan 2016", "4 Jan 14:15", "4 Jan 14:55", "4 Jan 15:35", "4 Jan 16:20", "5 Jan 08:25", "5 Jan 09:05",
  "5 Jan 09:45", "5 Jan 10:25", "5 Jan 11:05", "5 Jan 11:45", "5 Jan 12:25", "5 Jan 13:05", "5 Jan 13:45", "5 Jan 14:25",
  "5 Jan 15:05", "5 Jan 15:45", "5 Jan 16:25", "6 Jan 08:30", "6 Jan 09:10", "6 Jan 09:50", "6 Jan 10:30", "6 Jan 11:10",
  "6 Jan 11:50", "6 Jan 12:30"];
document.getElementById("times").innerHTML = stamps.map((stamp, i) =>
  rect(1 + i * 64, 0, 1, 3, "#000") + `<text class="scale" x="${i * 64}" y="12">${stamp}</text>`).join("");
```
